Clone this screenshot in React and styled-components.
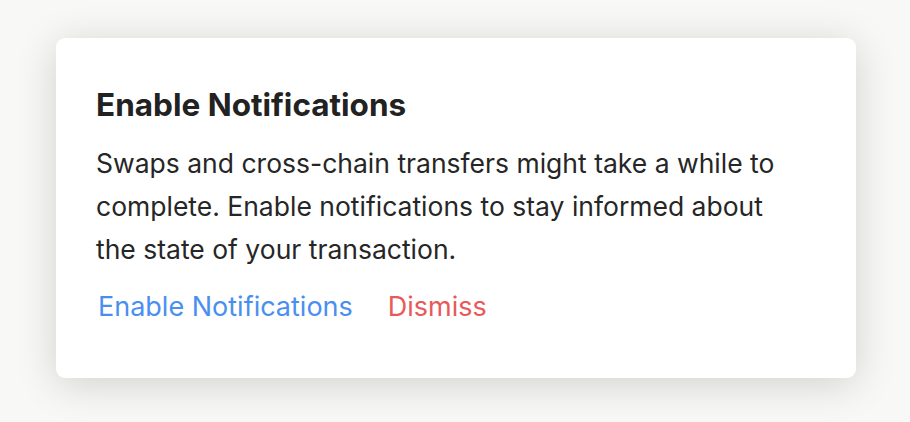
import styled, { createGlobalStyle } from "styled-components";

const GlobalStyle = createGlobalStyle`
  html, body {
    margin: 0;
    padding: 0;
    background: #f8f8f7;
  }
  body {
    font-family: Inter, "Noto Sans", sans-serif;
  }
`;

const Page = styled.div`
  width: 910px;
  height: 422px;
  box-sizing: border-box;
  padding: 38px 54px 0 56px;
`;

const Card = styled.div`
  width: 800px;
  height: 340px;
  box-sizing: border-box;
  background: #fff;
  border-radius: 9px;
  box-shadow: 0 6px 40px rgba(0, 0, 0, 0.16);
  padding: 47px 40px 0 40px;
  display: flex;
  flex-direction: column;
`;

const Title = styled.h2`
  margin: 0;
  font-size: 31.5px;
  font-weight: 700;
  line-height: 40px;
  color: #222;
`;

const Body = styled.p`
  margin: 17px 0 0;
  max-width: 705px;
  font-size: 26.5px;
  line-height: 43px;
  color: #262626;
`;

const Actions = styled.div`
  display: flex;
  gap: 35px;
  margin-top: 18px;
  padding-left: 2px;
`;

const Action = styled.button`
  border: none;
  background: none;
  padding: 0;
  font-family: inherit;
  font-size: 27px;
  line-height: 36px;
  cursor: pointer;
  color: ${(props) => (props.danger ? "#e85a5a" : "#4a8ff0")};
`;

export default function App() {
  return (
    <>
      <GlobalStyle />
      <Page>
        <Card>
          <Title>Enable Notifications</Title>
          <Body>
            Swaps and cross-chain transfers might take a while to complete.
            Enable notifications to stay informed about the state of your
            transaction.
          </Body>
          <Actions>
            <Action>Enable Notifications</Action>
            <Action danger>Dismiss</Action>
          </Actions>
        </Card>
      </Page>
    </>
  );
}
